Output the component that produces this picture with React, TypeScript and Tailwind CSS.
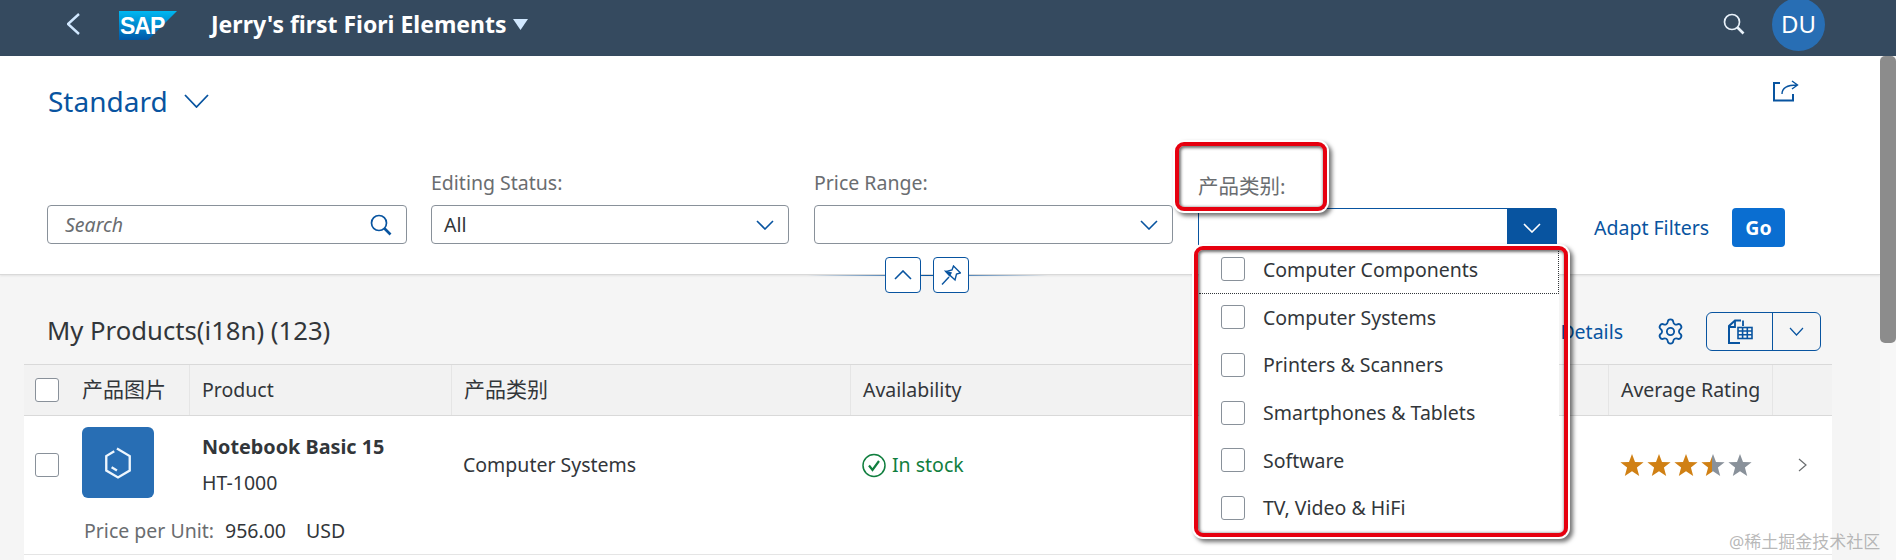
import React from "react";
import { Settings } from "lucide-react";

const font = "font-['Noto_Sans','Noto_Sans_CJK_SC',sans-serif]";

const categories = [
  "Computer Components",
  "Computer Systems",
  "Printers & Scanners",
  "Smartphones & Tablets",
  "Software",
  "TV, Video & HiFi",
];

// thin sap style chevron, drawn to size
const Chevron = ({ w = 18, h = 10, dir = "down", color = "#0854a0", sw = 1.6 }: { w?: number; h?: number; dir?: string; color?: string; sw?: number }) => {
  const p =
    dir === "down"
      ? `M1 1 L${w / 2} ${h - 1} L${w - 1} 1`
      : dir === "up"
      ? `M1 ${h - 1} L${w / 2} 1 L${w - 1} ${h - 1}`
      : dir === "left"
      ? `M${w - 1} 1 L1 ${h / 2} L${w - 1} ${h - 1}`
      : `M1 1 L${w - 1} ${h / 2} L1 ${h - 1}`;
  return (
    <svg width={w} height={h} viewBox={`0 0 ${w} ${h}`} fill="none" className="shrink-0">
      <path d={p} stroke={color} strokeWidth={sw} />
    </svg>
  );
};

const SearchIcon = ({ color, size = 22 }: { color: string; size?: number }) => (
  <svg width={size} height={size} viewBox="0 0 22 22" fill="none" className="shrink-0">
    <circle cx="9" cy="9" r="7.5" stroke={color} strokeWidth="1.7" />
    <path d="M14.5 14.5 L20.5 20.5" stroke={color} strokeWidth="2.6" />
  </svg>
);

const Checkbox = () => <div className="w-6 h-6 shrink-0 rounded-[3px] border border-[#89919a] bg-white" />;

const Star = ({ kind }: { kind: "full" | "half" | "empty" }) => {
  const id = "half-star";
  const fill = kind === "full" ? "#d08014" : kind === "empty" ? "#89919a" : `url(#${id})`;
  return (
    <svg width="24" height="24" viewBox="0 0 24 23" className="shrink-0">
      {kind === "half" && (
        <defs>
          <linearGradient id={id}>
            <stop offset="46%" stopColor="#d08014" />
            <stop offset="46%" stopColor="#89919a" />
          </linearGradient>
        </defs>
      )}
      <path d="M12 0.5 L15 8.4 L23.6 8.8 L16.9 14 L19.2 22.4 L12 17.7 L4.8 22.4 L7.1 14 L0.4 8.8 L9 8.4 Z" fill={fill} />
    </svg>
  );
};

const Select = ({ label, value, className }: { label: string; value?: string; className: string }) => (
  <div className={className}>
    <div className="h-6 leading-6 mb-[10px] text-[19.5px] text-[#6a6d70]">{label}</div>
    <div className="h-[39px] flex items-center justify-between pl-3 pr-[14px] bg-white border border-[#89919a] rounded-[4px] text-[19.5px] text-[#32363a]">
      <span>{value}</span>
      <Chevron />
    </div>
  </div>
);

const headCell = "h-full flex items-center pl-3 border-l border-[#e5e5e5] text-[19.5px] text-[#32363a]";
const cjkHead = "h-full flex items-center pl-3 border-l border-[#e5e5e5] text-[21px] text-[#32363a]";

export default function App() {
  return (
    <div className={`${font} relative w-[1896px] h-[560px] overflow-hidden flex flex-col bg-[#f5f5f5]`}>
      <header className="h-14 shrink-0 bg-[#354a5f] flex items-center pb-2 pl-[67px] pr-[71px]">
        <Chevron w={13} h={22} dir="left" color="#d1e8ff" sw={2.4} />
        <svg width="58" height="30" viewBox="0 0 58 30" className="ml-[39px] mt-[3px] shrink-0">
          <defs>
            <linearGradient id="sapfill" x1="0" y1="0" x2="0" y2="1">
              <stop offset="0%" stopColor="#00b8f1" />
              <stop offset="100%" stopColor="#0057a8" />
            </linearGradient>
          </defs>
          <path d="M0 0 H58 L29 29 H0 Z" fill="url(#sapfill)" />
          <text x="1" y="23" fontSize="23" fontWeight="800" fill="#fff" fontFamily="Liberation Sans, sans-serif" letterSpacing="-1">
            SAP
          </text>
        </svg>
        <div className="ml-[34px] text-[23px] font-bold text-white leading-none">Jerry's first Fiori Elements</div>
        <svg width="15" height="11" viewBox="0 0 15 11" className="ml-[6px] shrink-0">
          <path d="M0 0 H15 L7.5 11 Z" fill="#d1e8ff" />
        </svg>
        <div className="ml-auto mr-[27px]">
          <SearchIcon color="#e8f1fa" />
        </div>
        <div className="w-[53px] h-[53px] rounded-full bg-[#286eb4] text-white text-[24px] flex items-center justify-center">DU</div>
      </header>

      <div className="flex-1 min-h-0 flex">
        <main className="flex-1 min-w-0 flex flex-col">
          <section className="h-[219px] shrink-0 bg-white border-b border-[#d9d9d9] shadow-[0_1px_2px_rgba(0,0,0,0.08)] flex flex-col">
            <div className="h-[115px] pl-12 pr-[81px] pt-[22px] flex items-start justify-between">
              <div className="flex items-center gap-4 h-[46px] text-[28px] text-[#0854a0]">
                Standard
                <Chevron w={25} h={14} sw={1.8} />
              </div>
              <svg width="26" height="22" viewBox="0 0 26 22" fill="none" className="mt-[2px]">
                <path d="M7 3 H1 V20.5 H20 V14" stroke="#0854a0" strokeWidth="2" />
                <path d="M9 14 C9 8 13 5 24 5 M19 1 L24.5 5 L19 9" stroke="#0854a0" strokeWidth="1.4" />
              </svg>
            </div>
            <div className="flex items-start pl-[47px]">
              <div className="w-[360px] mt-[34px] h-[39px] flex items-center justify-between pl-[17px] pr-[14px] border border-[#89919a] rounded-[4px] bg-white">
                <span className="text-[19.5px] italic text-[#6a6d70]">Search</span>
                <SearchIcon color="#0854a0" />
              </div>
              <Select label="Editing Status:" value="All" className="w-[358px] ml-6" />
              <Select label="Price Range:" className="w-[359px] ml-[25px]" />
              <div className="w-[359px] ml-[25px] pt-[3px]">
                <div className="h-6 leading-6 mb-[10px] text-[20.5px] text-[#6a6d70]">产品类别:</div>
                <div className="h-[39px] flex justify-end bg-white border border-[#0854a0] rounded-[2px]">
                  <div className="w-[49px] bg-[#0854a0] flex items-center justify-center">
                    <Chevron color="#ffffff" />
                  </div>
                </div>
              </div>
              <div className="ml-[37px] mt-[37px] w-[114px] whitespace-nowrap h-[39px] leading-[39px] text-[19.5px] text-[#0854a0]">Adapt Filters</div>
              <div className="ml-6 mt-[37px] w-[53px] h-[39px] rounded-[4px] bg-[#0a6ed1] text-white text-[19.5px] font-bold flex items-center justify-center">Go</div>
            </div>
          </section>

          <section className="flex-1 min-h-0 flex flex-col">
            <div className="h-[89px] shrink-0 pl-[47px] pr-[59px] pt-[37px] flex items-start">
              <div className="h-[39px] leading-[38px] text-[25.7px] text-[#32363a]">My Products(i18n) (123)</div>
              <div className="ml-auto h-[39px] leading-[39px] text-[19.5px] text-[#0854a0]">Hide Details</div>
              <div className="ml-[33px] mt-[5px]">
                <Settings size={29} strokeWidth={1.5} color="#0854a0" />
              </div>
              <div className="ml-[21px] w-[115px] h-[39px] flex border border-[#0854a0] rounded-[6px]">
                <div className="w-[66px] border-r border-[#0854a0] flex items-center justify-center">
                  <svg width="26" height="26" viewBox="0 0 26 26" fill="none">
                    <path d="M14 1.5 H8 L2 7 V24 H13" stroke="#0854a0" strokeWidth="2" />
                    <path d="M16 1.5 V7 M8 2 V8 H2" stroke="#0854a0" strokeWidth="1.8" />
                    <rect x="11" y="8.5" width="14" height="11" fill="#f5f5f5" stroke="#0854a0" strokeWidth="1.6" />
                    <path d="M11 12 H25 M11 15.8 H25 M15.6 8.5 V19.5 M20.3 8.5 V19.5" stroke="#0854a0" strokeWidth="1.6" />
                  </svg>
                </div>
                <div className="flex-1 flex items-center justify-center">
                  <Chevron w={15} h={9} sw={1.2} />
                </div>
              </div>
            </div>

            <div className="ml-6 w-[1808px] flex-1 bg-white">
              <div className="h-[52px] grid grid-cols-[48px_117px_262px_399px_758px_164px_60px] items-center bg-[#f2f2f2] border-t border-b border-[#d9d9d9]">
                <div className="pl-[11px]">
                  <Checkbox />
                </div>
                <div className="h-full flex items-center pl-[10px] text-[21px] text-[#32363a]">产品图片</div>
                <div className={headCell}>Product</div>
                <div className={cjkHead}>产品类别</div>
                <div className={headCell}>Availability</div>
                <div className={headCell}>Average Rating</div>
                <div className="h-full border-l border-[#e5e5e5]" />
              </div>
              <div className="border-b border-[#e5e5e5]">
                <div className="h-[98px] grid grid-cols-[48px_117px_262px_399px_758px_164px_60px] items-center">
                  <div className="pl-[11px]">
                    <Checkbox />
                  </div>
                  <div className="pl-[10px]">
                    <div className="w-[72px] h-[71px] -mt-[5px] rounded-[6px] bg-[#286eb4] flex items-center justify-center">
                      <svg width="26" height="32" viewBox="0 0 24 30" fill="none" stroke="#eef6fd" strokeWidth="2.2">
                        <path d="M8.5 4 L1 8.5 V22 L12 28.5 L23 22 V8.5 L11 1.5" />
                        <path d="M6 19 L11 22" />
                      </svg>
                    </div>
                  </div>
                  <div className="pl-[13px]">
                    <div className="text-[19.8px] font-bold text-[#32363a] leading-6 mb-3">Notebook Basic 15</div>
                    <div className="text-[19.5px] text-[#32363a] leading-6">HT-1000</div>
                  </div>
                  <div className="pl-3 text-[19.5px] text-[#32363a]">Computer Systems</div>
                  <div className="pl-3 flex items-center gap-[6px] text-[19.5px] text-[#107e3e]">
                    <svg width="24" height="25" viewBox="0 0 24 25" fill="none" stroke="#107e3e">
                      <circle cx="12" cy="12.5" r="11" strokeWidth="1.5" />
                      <path d="M7 12.5 L10.5 17 L17 8" strokeWidth="2.2" />
                    </svg>
                    In stock
                  </div>
                  <div className="pl-3 flex gap-[3px]">
                    <Star kind="full" />
                    <Star kind="full" />
                    <Star kind="full" />
                    <Star kind="half" />
                    <Star kind="empty" />
                  </div>
                  <div className="pl-[26px]">
                    <Chevron w={9} h={14} dir="right" color="#6a6d70" sw={1.2} />
                  </div>
                </div>
                <div className="h-[34px] mb-[6px] pl-[60px] flex items-center text-[19.5px]">
                  <span className="text-[#6a6d70]">Price per Unit:</span>
                  <span className="ml-[11px] text-[#32363a]">956.00</span>
                  <span className="ml-[20px] text-[#32363a]">USD</span>
                </div>
              </div>
            </div>
          </section>
        </main>
        <div className="w-4 shrink-0 bg-[#f7f7f7]">
          <div className="h-[287px] rounded-[5px] bg-[#8c8c8c]" />
        </div>
      </div>

      {/* collapse + pin buttons sitting on the filter bar edge */}
      <div className="absolute left-[807px] top-[257px] w-[241px] h-9 flex items-center justify-center">
        <div className="absolute inset-x-0 top-[18px] h-px bg-gradient-to-r from-transparent via-[#0854a0] to-transparent" />
        <div className="relative flex gap-3 pr-[1px]">
          <div className="w-9 h-9 flex items-center justify-center bg-white border border-[#0854a0] rounded-[4px]">
            <Chevron w={18} h={10} dir="up" />
          </div>
          <div className="w-9 h-9 flex items-center justify-center bg-white border border-[#0854a0] rounded-[4px]">
            <svg width="20" height="20" viewBox="0 0 20 20" fill="none" stroke="#0854a0" strokeWidth="1.4">
              <path d="M12.5 1 L19.5 8 L15.5 9 L14 15 L5 6.5 L11 5 Z" />
              <path d="M5 6.5 L10 8 L8.5 10.5 Z" fill="#0854a0" />
              <path d="M8 12 L1 19.5" />
            </svg>
          </div>
        </div>
      </div>

      {/* open multi combobox list */}
      <div className="absolute left-[1199px] top-[246px] w-[360px] h-[287px] bg-white">
        {categories.map((c, i) => (
          <div
            key={c}
            className={`h-[47.6px] flex items-center pl-[22px] gap-[18px] text-[19.5px] text-[#32363a] ${i === 0 ? "border-b border-r border-dotted border-[#32363a]" : ""}`}
          >
            <Checkbox />
            {c}
          </div>
        ))}
      </div>

      {/* red annotation frames */}
      <div className="absolute left-[1175px] top-[142px] w-[152px] h-[69px] rounded-[9px] border-4 border-[#e6000f] shadow-[0_0_0_2px_#ffffff,3px_3px_4px_2px_rgba(0,0,0,0.55),inset_1px_1px_3px_1px_rgba(0,0,0,0.55)]" />
      <div className="absolute left-[1194px] top-[246px] w-[374px] h-[291px] rounded-[9px] border-4 border-[#e6000f] shadow-[0_0_0_2px_#ffffff,3px_3px_4px_2px_rgba(0,0,0,0.55),inset_1px_1px_3px_1px_rgba(0,0,0,0.55)]" />

      <div className="absolute left-[1729px] top-[529px] text-[17px] text-[#9a9a9a]/70">@稀土掘金技术社区</div>
    </div>
  );
}
